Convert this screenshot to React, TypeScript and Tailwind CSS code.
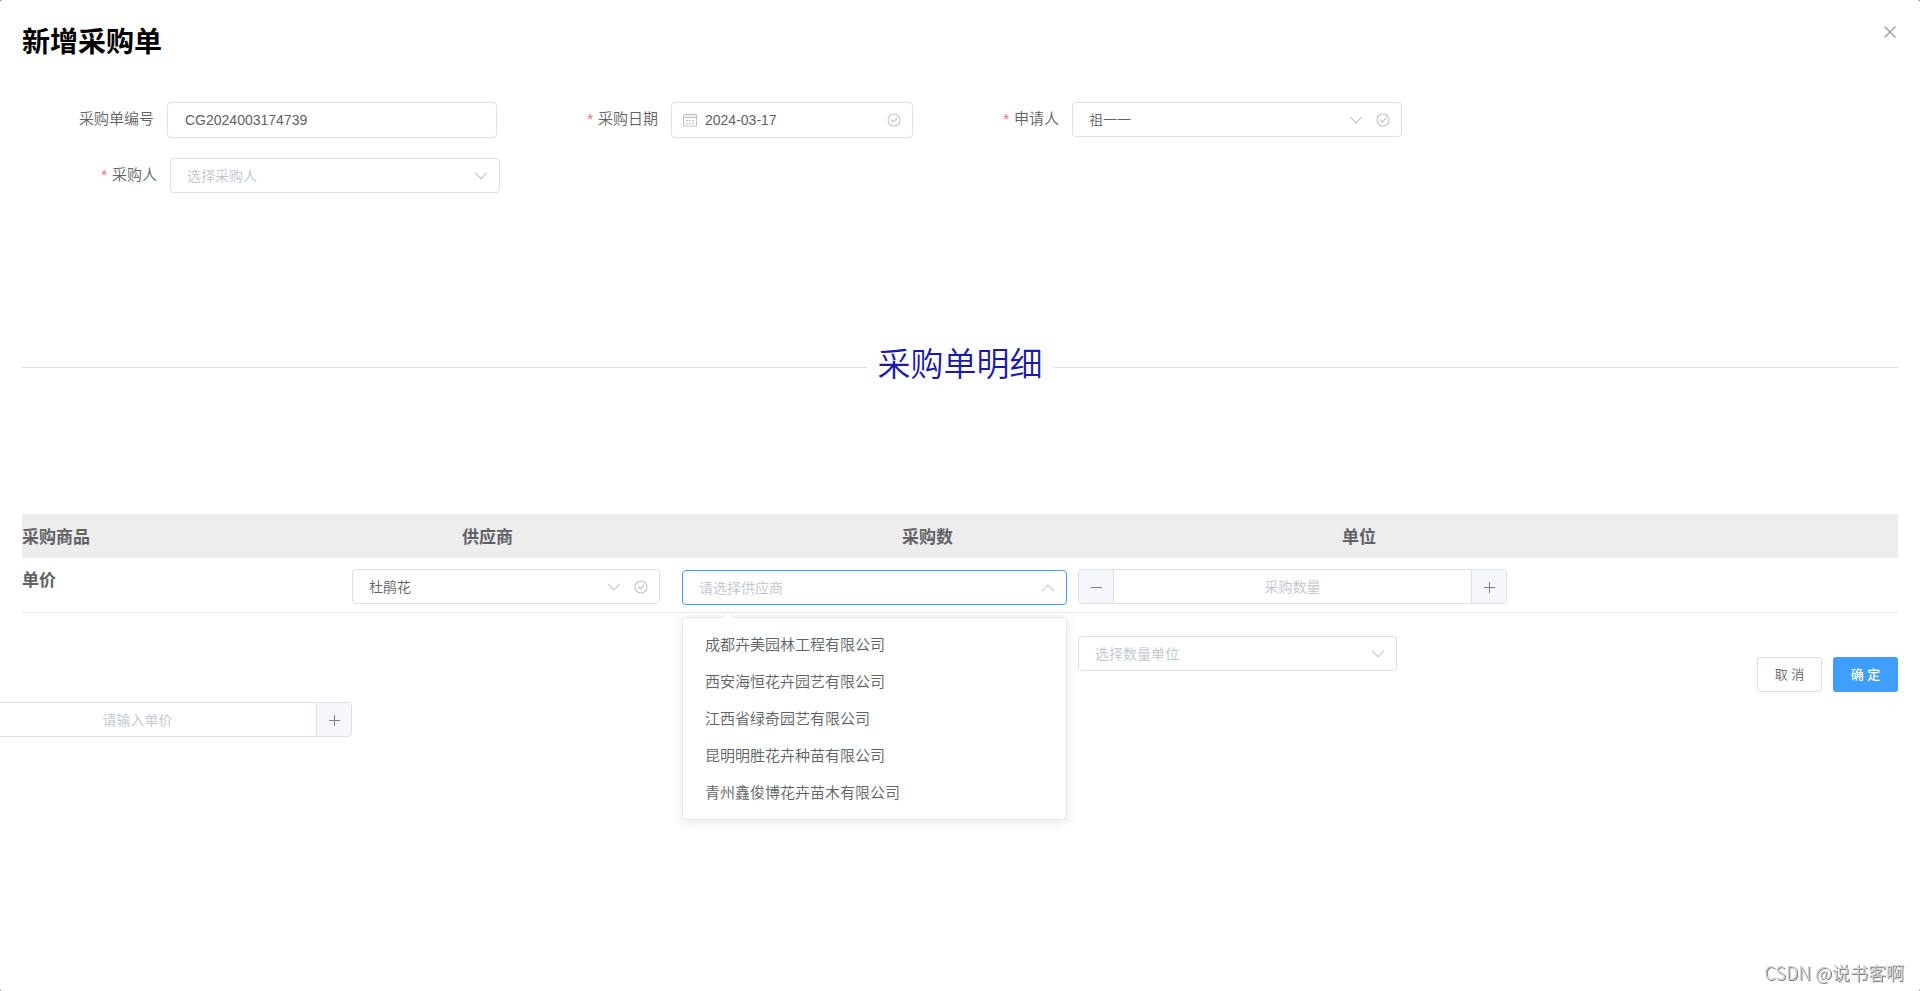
import React, { useState } from 'react';

const CONTROL = 'w-full rounded-[4px] border bg-white text-sm outline-none placeholder:text-[#c0c4cc]';

const SUPPLIERS = [
  '成都卉美园林工程有限公司',
  '西安海恒花卉园艺有限公司',
  '江西省绿奇园艺有限公司',
  '昆明明胜花卉种苗有限公司',
  '青州鑫俊博花卉苗木有限公司',
];

const HEADERS = ['采购商品', '供应商', '采购数', '单位'];

const Chevron: React.FC<{ up?: boolean }> = ({ up = false }) => (
  <svg width="14" height="14" viewBox="0 0 14 14" fill="none" stroke="#c0c4cc" strokeWidth="1.1" strokeLinecap="round" strokeLinejoin="round">
    <path d={up ? 'M1.5 9.8 7 4.2l5.5 5.6' : 'M1.5 4.2 7 9.8l5.5-5.6'} />
  </svg>
);

const CircleCheck: React.FC = () => (
  <svg width="14" height="14" viewBox="0 0 14 14" fill="none" stroke="#c0c4cc" strokeWidth="1.1" strokeLinecap="round" strokeLinejoin="round">
    <circle cx="7" cy="7" r="6" />
    <path d="M4.2 6.8 6.3 9l3.9-4" />
  </svg>
);

const Calendar: React.FC = () => (
  <svg width="14" height="14" viewBox="0 0 14 14" fill="none" stroke="#c0c4cc" strokeWidth="1">
    <path d="M0.5 1.5h13v11.5H0.5zM0.5 4.5h13" />
    <path d="M1 3h12" strokeOpacity="0.5" />
    <path d="M3.8 0v2.5M10.2 0v2.5" />
    <path d="M3 7.5h2M6 7.5h2M9 7.5h2M3 10.5h2M6 10.5h2M9 10.5h2" />
  </svg>
);

interface SelectBoxProps {
  id: string;
  label?: string;
  placeholder?: string;
  value?: string;
  valid?: boolean;
  open?: boolean;
}

const SelectBox: React.FC<SelectBoxProps> = ({ id, label, placeholder, value, valid, open }) => (
  <div className="relative">
    <select
      id={id}
      aria-label={label}
      defaultValue={value ?? ''}
      className={`${CONTROL} h-[35px] appearance-none pl-4 ${open ? 'border-[#409eff]' : 'border-[#dcdfe6]'} ${
        value ? 'text-[#606266]' : 'text-[#c0c4cc]'
      }`}
    >
      <option value={value ?? ''}>{value ?? placeholder}</option>
    </select>
    <span className="pointer-events-none absolute inset-y-0 right-3 flex items-center gap-[13px]">
      <Chevron up={open} />
      {valid && <CircleCheck />}
    </span>
  </div>
);

interface FieldProps {
  id: string;
  label: string;
  required?: boolean;
  labelClass: string;
  controlClass: string;
  children: React.ReactNode;
}

const Field: React.FC<FieldProps> = ({ id, label, required, labelClass, controlClass, children }) => (
  <div className="flex">
    <label htmlFor={id} className={`pr-[13px] text-right text-[15px] leading-[34px] ${labelClass}`}>
      {required && <span className="mr-[5px] text-[#f56c6c]">*</span>}
      {label}
    </label>
    <div className={controlClass}>{children}</div>
  </div>
);

const StepButton: React.FC<{ label: string; plus?: boolean; side: string }> = ({ label, plus, side }) => (
  <button type="button" aria-label={label} className={`flex w-[35px] items-center justify-center border-[#dcdfe6] bg-[#f5f7fa] ${side}`}>
    <svg width="12" height="12" viewBox="0 0 12 12" stroke="#606266" strokeWidth="1" opacity="0.8">
      <path d={plus ? 'M1 6.5h11M6.5 1v11' : 'M1 6.5h11'} />
    </svg>
  </button>
);

const NumberBox: React.FC<{ label: string; placeholder: string }> = ({ label, placeholder }) => (
  <div className="flex h-[35px] w-[429px] overflow-hidden rounded-[4px] border border-[#dcdfe6] bg-white">
    <StepButton label={`${label}减少`} side="border-r" />
    <input
      type="text"
      inputMode="numeric"
      aria-label={label}
      placeholder={placeholder}
      className="min-w-0 flex-1 text-center text-sm text-[#606266] outline-none placeholder:text-[#c0c4cc]"
    />
    <StepButton label={`${label}增加`} plus side="border-l" />
  </div>
);

const SupplierMenu: React.FC<{ onPick: () => void }> = ({ onPick }) => (
  <div className="absolute top-12 right-[11px] left-0 z-10 rounded-[4px] border border-[#e4e7ed] bg-white py-2 shadow-[0_2px_12px_rgba(0,0,0,0.1)]">
    <svg className="absolute -top-[6px] left-[38px]" width="14" height="7" viewBox="0 0 14 7">
      <path d="M0 7 7 0l7 7z" fill="#fff" />
      <path d="M1 6 7 0l6 6" fill="none" stroke="#ebeef5" />
    </svg>
    <ul role="listbox" aria-label="供应商">
      {SUPPLIERS.map((name) => (
        <li key={name} role="option" aria-selected={false} onClick={onPick} className="cursor-pointer px-[22px] text-[15px] leading-[37px] hover:bg-[#f5f7fa]">
          {name}
        </li>
      ))}
    </ul>
  </div>
);

const App: React.FC = () => {
  const [menuOpen, setMenuOpen] = useState(true);

  return (
    <div className="bg-[#555] font-['Liberation_Sans','Noto_Sans_CJK_SC',sans-serif] font-[350] text-[#606266]">
      <main className="min-h-screen overflow-x-clip rounded-[2px] bg-white px-[22px] pt-[25px]">
        <header className="flex items-start justify-between">
          <h1 className="text-[28px] leading-9 font-bold text-black">新增采购单</h1>
          <button type="button" aria-label="关闭" className="mr-px flex">
            <svg width="14" height="14" viewBox="0 0 14 14" stroke="#909399" strokeWidth="1.1">
              <path d="M1.5 1.5 12.5 12.5M12.5 1.5 1.5 12.5" />
            </svg>
          </button>
        </header>

        <form className="mt-[41px] flex flex-col gap-5">
          <div className="flex gap-8">
            <Field id="order-no" label="采购单编号" labelClass="w-[145px]" controlClass="w-[330px]">
              <input
                id="order-no"
                type="text"
                defaultValue="CG2024003174739"
                className={`${CONTROL} h-9 border-[#dcdfe6] pl-[17px]`}
              />
            </Field>
            <Field id="order-date" label="采购日期" required labelClass="w-[142px]" controlClass="relative w-[242px]">
              <input
                id="order-date"
                type="text"
                defaultValue="2024-03-17"
                className={`${CONTROL} h-9 border-[#dcdfe6] pl-[33px]`}
              />
              <span className="pointer-events-none absolute inset-y-0 right-3 left-3 flex items-center justify-between">
                <Calendar />
                <CircleCheck />
              </span>
            </Field>
            <Field id="applicant" label="申请人" required labelClass="w-[127px]" controlClass="w-[330px]">
              <SelectBox id="applicant" value="祖一一" valid />
            </Field>
          </div>
          <Field id="buyer" label="采购人" required labelClass="w-[148px]" controlClass="w-[330px]">
            <SelectBox id="buyer" placeholder="选择采购人" />
          </Field>
        </form>

        <div className="mt-[147px] flex items-center">
          <span className="h-px flex-1 bg-[#dcdfe6]" />
          <h2 className="px-[11px] pb-1 text-[33px] leading-[50px] font-[350] text-[#1a1aa6]">采购单明细</h2>
          <span className="h-px flex-1 bg-[#dcdfe6]" />
        </div>

        <section className="mt-[120px]">
          <div className="grid h-11 grid-cols-[440fr_440fr_440fr_556fr] items-center bg-[#ededed] pt-[3px] text-[17px] font-bold">
            {HEADERS.map((name) => (
              <span key={name}>{name}</span>
            ))}
          </div>

          <div className="grid grid-cols-[330fr_330fr_396fr_820fr] border-b border-[#ebeef5] pt-[11px] pb-[7px]">
            <span className="text-[17px] leading-6 font-bold">单价</span>
            <div className="pr-[22px]">
              <SelectBox id="product" label="采购商品" value="杜鹃花" valid />
            </div>
            <div className="relative pt-px pr-[11px]" onClick={() => setMenuOpen(true)}>
              <SelectBox id="supplier" label="供应商" placeholder="请选择供应商" open={menuOpen} />
              {menuOpen && <SupplierMenu onPick={() => setMenuOpen(false)} />}
            </div>
            <NumberBox label="采购数量" placeholder="采购数量" />
          </div>

          <div className="mt-[23px] grid grid-cols-[330fr_330fr_396fr_820fr]">
            <div className="col-start-4 flex h-14 justify-between">
              <div className="w-[319px]">
                <SelectBox id="unit" label="单位" placeholder="选择数量单位" />
              </div>
              <div className="flex gap-[11px] self-end text-[13px]">
                <button type="button" className="h-[35px] w-[65px] rounded-[3px] border border-[#dcdfe6] bg-white">
                  取 消
                </button>
                <button type="button" className="h-[35px] w-[65px] rounded-[3px] bg-[#409eff] font-medium text-white">
                  确 定
                </button>
              </div>
            </div>
          </div>

          <div className="mt-[10px] -ml-[99px]">
            <NumberBox label="单价" placeholder="请输入单价" />
          </div>
        </section>
      </main>

      <footer className="fixed right-4 bottom-[5px] font-['Noto_Sans_CJK_SC',sans-serif] text-lg text-[#d0d0d0] [text-shadow:1px_1px_0_#808080]">
        CSDN @说书客啊
      </footer>
    </div>
  );
};

export default App;
